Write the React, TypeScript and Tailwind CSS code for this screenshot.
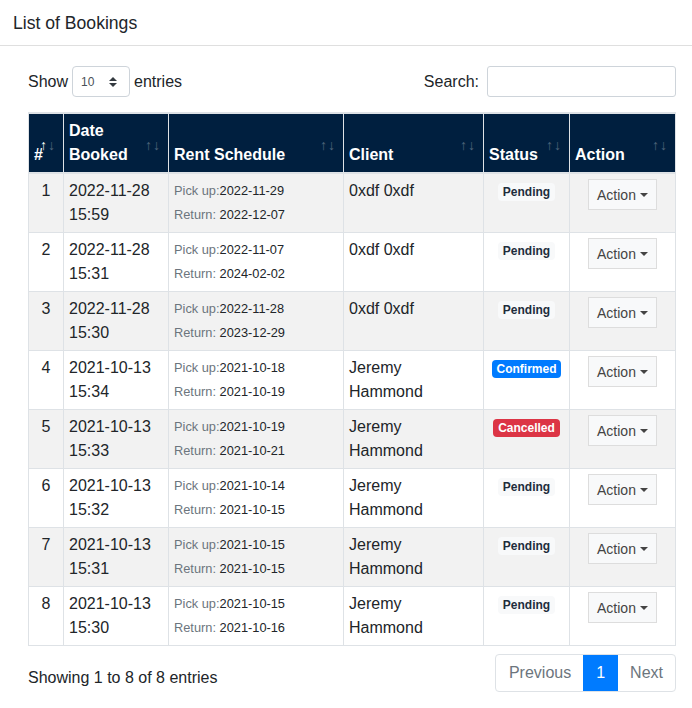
import React from "react";

const bookings = [
  { id: 1, booked: "2022-11-28", time: "15:59", pickup: "2022-11-29", ret: "2022-12-07", client: "0xdf 0xdf", status: "Pending" },
  { id: 2, booked: "2022-11-28", time: "15:31", pickup: "2022-11-07", ret: "2024-02-02", client: "0xdf 0xdf", status: "Pending" },
  { id: 3, booked: "2022-11-28", time: "15:30", pickup: "2022-11-28", ret: "2023-12-29", client: "0xdf 0xdf", status: "Pending" },
  { id: 4, booked: "2021-10-13", time: "15:34", pickup: "2021-10-18", ret: "2021-10-19", client: "Jeremy Hammond", status: "Confirmed" },
  { id: 5, booked: "2021-10-13", time: "15:33", pickup: "2021-10-19", ret: "2021-10-21", client: "Jeremy Hammond", status: "Cancelled" },
  { id: 6, booked: "2021-10-13", time: "15:32", pickup: "2021-10-14", ret: "2021-10-15", client: "Jeremy Hammond", status: "Pending" },
  { id: 7, booked: "2021-10-13", time: "15:31", pickup: "2021-10-15", ret: "2021-10-15", client: "Jeremy Hammond", status: "Pending" },
  { id: 8, booked: "2021-10-13", time: "15:30", pickup: "2021-10-15", ret: "2021-10-16", client: "Jeremy Hammond", status: "Pending" },
];

const badgeClass: Record<string, string> = {
  Pending: "bg-[#f8f9fa] text-[#1f2d3d]",
  Confirmed: "bg-[#007bff] text-white",
  Cancelled: "bg-[#dc3545] text-white",
};

const SortHead = ({ label, active, last }: { label: React.ReactNode; active?: boolean; last?: boolean }) => (
  <th
    className={`relative border-l border-t-2 border-b-2 border-[#dee2e6] p-[5px] pr-[30px] text-left align-bottom font-bold leading-6 ${last ? "border-r" : ""}`}
  >
    {label}
    <span className={`absolute right-[16px] bottom-[15px] text-[14px] leading-6 ${active ? "opacity-100" : "opacity-30"}`}>↑</span>
    <span className="absolute right-[8px] bottom-[15px] text-[14px] leading-6 opacity-30">↓</span>
  </th>
);

const cell = "border-l border-b border-[#dee2e6] p-[5px] align-top leading-6";

const App = () => {
  return (
    <div className="min-h-[708px] w-[692px] bg-white font-['Liberation_Sans',Arial,sans-serif] text-[16px] text-[#212529]">
      {/* HEADER */}
      <div className="border-b border-[rgba(0,0,0,0.125)] px-[13px] pt-[13px] pb-[11px]">
        <h3 className="text-[17.6px] leading-[1.2]">List of Bookings</h3>
      </div>

      {/* BODY */}
      <div className="pl-[28px] pr-[16px] pt-[20px]">
        {/* LENGTH + SEARCH */}
        <div className="flex items-center justify-between">
          <label className="flex items-center leading-6">
            Show
            <span className="mx-[4px] flex h-[31px] w-[58px] items-center justify-between rounded-[4px] border border-[#ced4da] pl-[8px] pr-[12px] text-[12px] text-[#495057]">
              10
              <svg width="8" height="10" viewBox="0 0 4 5">
                <path fill="#343a40" d="M2 0L0 2h4zm0 5L0 3h4z" />
              </svg>
            </span>
            entries
          </label>
          <label className="flex items-center leading-6">
            Search:
            <span className="ml-[8px] block h-[31px] w-[189px] rounded-[3px] border border-[#ced4da] bg-white" />
          </label>
        </div>

        {/* TABLE */}
        <table className="mt-[15px] w-[648px] table-fixed border-separate border-spacing-0">
          <colgroup>
            <col className="w-[35px]" />
            <col className="w-[105px]" />
            <col className="w-[175px]" />
            <col className="w-[140px]" />
            <col className="w-[86px]" />
            <col className="w-[107px]" />
          </colgroup>
          <thead className="bg-[#001f3f] text-white">
            <tr>
              <SortHead label="#" active />
              <SortHead label="Date Booked" />
              <SortHead label="Rent Schedule" />
              <SortHead label="Client" />
              <SortHead label="Status" />
              <SortHead label="Action" last />
            </tr>
          </thead>
          <tbody>
            {bookings.map((b) => (
              <tr key={b.id} className="odd:bg-[#f2f2f2]">
                <td className={`${cell} text-center`}>{b.id}</td>
                <td className={cell}>
                  <div>{b.booked}</div>
                  <div>{b.time}</div>
                </td>
                <td className={cell}>
                  <div className="text-[12.8px]">
                    <span className="text-[#6c757d]">Pick up:</span>
                    {b.pickup}
                  </div>
                  <div className="text-[12.8px]">
                    <span className="text-[#6c757d]">Return: </span>
                    {b.ret}
                  </div>
                </td>
                <td className={cell}>{b.client}</td>
                <td className={`${cell} text-center`}>
                  <span
                    className={`inline-block rounded-[4px] px-[4.8px] py-[3px] text-[12px] font-bold leading-none ${badgeClass[b.status]}`}
                  >
                    {b.status}
                  </span>
                </td>
                <td className={`${cell} border-r text-center`}>
                  <span className="inline-flex h-[31px] items-center border border-[#ddd] bg-[#f8f9fa] px-[8px] text-[14px] text-[#444]">
                    Action
                    <span className="ml-[4px] inline-block h-0 w-0 border-x-[4px] border-t-[4px] border-x-transparent border-t-[#444]" />
                  </span>
                </td>
              </tr>
            ))}
          </tbody>
        </table>

        {/* FOOTER */}
        <div className="mt-[8px] flex items-start justify-between">
          <div className="pt-[12px] leading-6">Showing 1 to 8 of 8 entries</div>
          <div className="flex h-[38px] overflow-hidden rounded-[4px] border border-[#dee2e6]">
            <span className="flex items-center pl-[13px] pr-[12px] text-[#6c757d]">Previous</span>
            <span className="flex items-center border-x border-[#007bff] bg-[#007bff] px-[12px] text-white">1</span>
            <span className="flex items-center px-[12px] text-[#6c757d]">Next</span>
          </div>
        </div>
      </div>
    </div>
  );
};

export default App;
